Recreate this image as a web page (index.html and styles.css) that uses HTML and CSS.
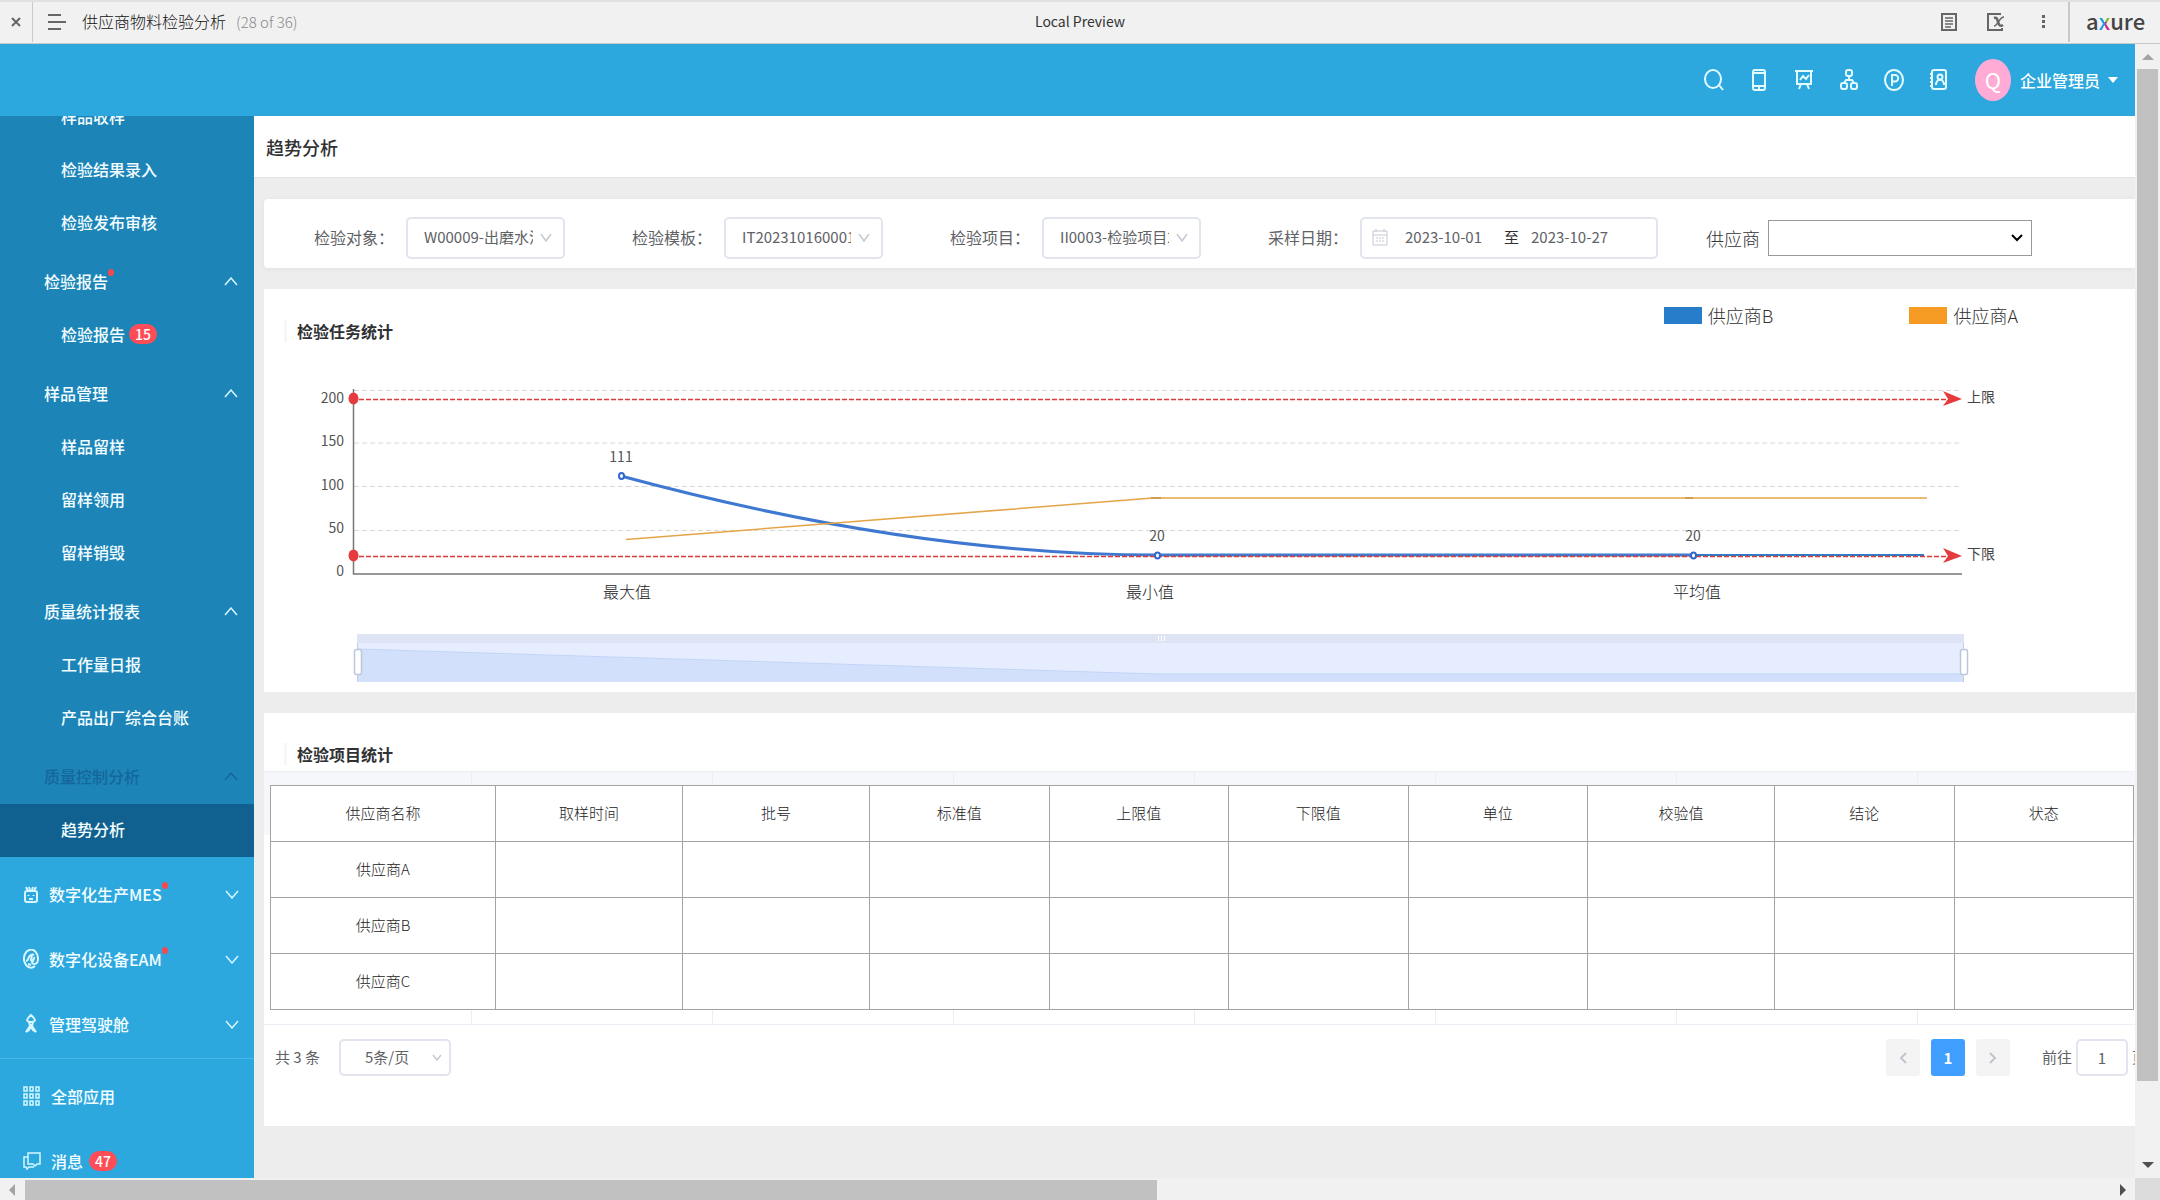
FILE: index.html
```html
<!DOCTYPE html>
<html lang="zh-CN">
<head>
<meta charset="utf-8">
<title>供应商物料检验分析</title>
<link rel="stylesheet" href="styles.css">
</head>
<body>
<header class="topbar">
  <button class="topbar-close" aria-label="关闭"><svg width="10" height="10" viewBox="0 0 10 10"><path d="M1 1l8 8M9 1l-8 8" stroke="#666" stroke-width="2"/></svg></button>
  <button class="topbar-menu" aria-label="页面列表"><svg width="18" height="16" viewBox="0 0 18 16"><path d="M0 1h13M0 8h18M0 15h13" stroke="#666" stroke-width="2"/></svg></button>
  <span class="topbar-title">供应商物料检验分析</span>
  <span class="topbar-count">(28 of 36)</span>
  <span class="topbar-mode">Local Preview</span>
  <div class="topbar-tools">
    <button aria-label="备注"><svg width="16" height="18" viewBox="0 0 16 18" fill="none" stroke="#666" stroke-width="2"><path d="M1 1h14v16H1z"/><path d="M4 5h8M4 8h8M4 11h8M4 14h6" stroke-width="1.5"/></svg></button>
    <button aria-label="变量"><svg width="18" height="18" viewBox="0 0 18 18" fill="none" stroke="#666" stroke-width="2"><path d="M14 1H1v16h14v-2"/><path d="M7 5c3-1 3 1 4 4s2 5 5 3" stroke-width="2.5"/><path d="M17 4c-2 0-3 1-5 4s-3 5-5 5" stroke-width="1.5"/></svg></button>
    <button aria-label="更多"><svg width="4" height="16" viewBox="0 0 4 16" fill="#666"><path d="M0 1h3v3H0zM0 6h3v3H0zM0 11h3v3H0z"/></svg></button>
  </div>
  <a class="axure" href="#">a<span class="axure-x">x</span>ure</a>
</header>

<div class="viewport">
  <div class="app">
    <div class="appbar">
      <button aria-label="搜索"><svg width="22" height="24" viewBox="0 0 22 24"><ellipse cx="10" cy="11" rx="8" ry="9"/><path d="M16 17l4 5"/></svg></button>
      <button aria-label="手机"><svg width="22" height="24" viewBox="0 0 22 24"><rect x="5" y="2" width="12" height="20" rx="2"/><path d="M5 5h12M5 18h12M10 20h2"/></svg></button>
      <button aria-label="看板"><svg width="22" height="24" viewBox="0 0 22 24"><path d="M2 3h18M4 3v13h14V3M7 12l3-4 3 3 3-4M8 16l-2 5M14 16l2 5"/></svg></button>
      <button aria-label="组织"><svg width="22" height="24" viewBox="0 0 22 24"><rect x="8" y="2" width="6" height="6" rx="2"/><rect x="3" y="15" width="6" height="6" rx="2"/><rect x="13" y="15" width="6" height="6" rx="2"/><path d="M11 8v4M6 15l2-3h6l2 3"/></svg></button>
      <button aria-label="平台"><svg width="22" height="24" viewBox="0 0 22 24"><ellipse cx="11" cy="12" rx="9" ry="10"/><path d="M9 18V7h3a3 3 0 0 1 0 6.500H9"/></svg></button>
      <button aria-label="通讯录"><svg width="22" height="24" viewBox="0 0 22 24"><rect x="4" y="2" width="14" height="19" rx="2"/><circle cx="12" cy="9" r="2.500"/><path d="M8 17c0-7 8-7 8 0M2 6h3M2 10h3M2 14h3M2 18h3"/></svg></button>
      <span class="avatar">Q</span>
      <button class="user">企业管理员<svg width="10" height="6" viewBox="0 0 10 6"><path class="solid" d="M0 0h10L5 6z"/></svg></button>
    </div>

    <div class="workspace">
      <nav class="sidebar">
        <ul class="tree">
          <li><a href="#">样品收样</a></li>
          <li><a href="#">检验结果录入</a></li>
          <li><a href="#">检验发布审核</a></li>
          <li class="group"><a href="#"><span class="dot">检验报告</span><svg class="chev" width="14" height="9" viewBox="0 0 14 9"><path d="M1 8l6-7 6 7"/></svg></a></li>
          <li><a href="#">检验报告<span class="badge">15</span></a></li>
          <li class="group"><a href="#">样品管理<svg class="chev" width="14" height="9" viewBox="0 0 14 9"><path d="M1 8l6-7 6 7"/></svg></a></li>
          <li><a href="#">样品留样</a></li>
          <li><a href="#">留样领用</a></li>
          <li><a href="#">留样销毁</a></li>
          <li class="group"><a href="#">质量统计报表<svg class="chev" width="14" height="9" viewBox="0 0 14 9"><path d="M1 8l6-7 6 7"/></svg></a></li>
          <li><a href="#">工作量日报</a></li>
          <li><a href="#">产品出厂综合台账</a></li>
          <li class="group dim"><a href="#">质量控制分析<svg class="chev" width="14" height="9" viewBox="0 0 14 9"><path d="M1 8l6-7 6 7"/></svg></a></li>
          <li class="active"><a href="#">趋势分析</a></li>
        </ul>
        <ul class="modules">
          <li><a href="#"><svg width="16" height="20" viewBox="0 0 16 20"><path d="M4 7h8a2 2 0 0 1 2 2v7a2 2 0 0 1-2 2H4a2 2 0 0 1-2-2V9a2 2 0 0 1 2-2zM3 3l2 4M6 3l1 3M10 3l-1 3M13 3l-2 4M5.500 11v1M10.500 11v1M6 15h4"/></svg><span class="dot">数字化生产MES</span><svg class="chev" width="14" height="9" viewBox="0 0 14 9"><path d="M1 1l6 7 6-7"/></svg></a></li>
          <li><a href="#"><svg width="16" height="20" viewBox="0 0 16 20"><path d="M12 17a7 9 0 1 1 3-7c0 6-6 6-6 3s3-2 2-5M3 12c2 0 2-2 3-4s3-3 5-2M5 15l3 1M9 6l-1 5 3 1"/></svg><span class="dot">数字化设备EAM</span><svg class="chev" width="14" height="9" viewBox="0 0 14 9"><path d="M1 1l6 7 6-7"/></svg></a></li>
          <li><a href="#"><svg width="16" height="20" viewBox="0 0 16 20"><path d="M8 1c-2 2-4 4-4 5s2 2 4 2 4-1 4-2-2-3-4-5zM6 8l1 4-4 6 3-2 2-4 2 4 3 2-4-6 1-4"/></svg><span>管理驾驶舱</span><svg class="chev" width="14" height="9" viewBox="0 0 14 9"><path d="M1 1l6 7 6-7"/></svg></a></li>
        </ul>
        <ul class="modules shortcuts">
          <li><a href="#"><svg width="18" height="20" viewBox="0 0 18 20"><path d="M1 1h3v4H1zM7 1h3v4H7zM13 1h3v4h-3zM1 8h3v4H1zM7 8h3v4H7zM13 8h3v4h-3zM1 15h3v4H1zM7 15h3v4H7zM13 15h3v4h-3z"/></svg><span>全部应用</span></a></li>
          <li><a href="#"><svg width="18" height="20" viewBox="0 0 18 20"><path d="M5 2h12v11h-3l-2 2-2-2H5zM5 6H1v10h2l1 2 2-2h5"/></svg><span>消息</span><span class="badge">47</span></a></li>
        </ul>
      </nav>

      <main class="content">
        <h1 class="page-title">趋势分析</h1>

        <form class="card filters">
          <div class="field"><label for="f-object">检验对象：</label><select id="f-object"><option>W00009-出磨水泥</option></select></div>
          <div class="field"><label for="f-template">检验模板：</label><select id="f-template"><option>IT202310160001</option></select></div>
          <div class="field"><label for="f-item">检验项目：</label><select id="f-item"><option>II0003-检验项目2</option></select></div>
          <div class="field"><label for="f-from">采样日期：</label>
            <div class="range">
              <svg width="16" height="18" viewBox="0 0 16 18"><path d="M1 3h14v14H1zM1 7h14M4 1v3M12 1v3M4 10h2M7 10h2M10 10h2M4 13h2M7 13h2M10 13h2"/></svg>
              <input id="f-from" value="2023-10-01"><span>至</span><input aria-label="结束日期" value="2023-10-27">
            </div>
          </div>
          <div class="field supplier"><label for="f-supplier">供应商</label><select id="f-supplier"><option></option></select></div>
        </form>

        <section class="card">
          <div class="chart-head">
            <h2>检验任务统计</h2>
            <ul class="legend">
              <li><i class="swatch blue"></i>供应商B</li>
              <li><i class="swatch orange"></i>供应商A</li>
            </ul>
          </div>
          <svg class="chart" viewBox="264 370 1871 322">
            <g class="grid"><path d="M354 390.500h1608M354 443h1608M354 486.500h1608M354 530.500h1608"/></g>
            <path class="axis" d="M353.500 389v185H1962"/>
            <g class="ticks"><text x="344" y="403">200</text><text x="344" y="446">150</text><text x="344" y="490">100</text><text x="344" y="533">50</text><text x="344" y="576">0</text></g>
            <path class="series-b" d="M621 476C821 530 999 555 1157 555H1693"/>
            <path class="series-b tail" d="M1693 555H1924"/>
            <path class="series-a" d="M626 539.500L1153 498H1927"/>
            <path class="series-a mark" d="M1151 498h10M1685 498h8"/>
            <path class="limit" d="M359 399.500H1950M359 556.500H1950"/>
            <g class="limit-end"><ellipse cx="353.500" cy="398.500" rx="5" ry="6"/><ellipse cx="353.500" cy="555.500" rx="5" ry="6"/><path d="M1943 391l19 8-19 7 5-7zM1943 548l19 8-19 7 5-7z"/></g>
            <g class="points"><ellipse cx="621.500" cy="476" rx="2.500" ry="3"/><ellipse cx="1157.500" cy="555.500" rx="2.500" ry="3"/><ellipse cx="1693.500" cy="555.500" rx="2.500" ry="3"/></g>
            <g class="values"><text x="621" y="462">111</text><text x="1157" y="541">20</text><text x="1693" y="541">20</text></g>
            <g class="cats"><text x="627" y="598">最大值</text><text x="1150" y="598">最小值</text><text x="1697" y="598">平均值</text></g>
            <g class="ends"><text x="1967" y="402">上限</text><text x="1967" y="559">下限</text></g>
            <g class="zoom">
              <path fill="#dee4f3" d="M357 634h1607v9H357z"/>
              <path fill="#e6edfe" d="M357 643h1607v39H357z"/>
              <path fill="#d3e0fc" d="M357 649L1157 674h807v8H357z"/>
              <path fill="none" stroke="#c1d4f8" d="M357 649L1157 674h807"/>
              <path fill="none" stroke="#c3cde6" d="M357.500 643v39M1963.500 643v39"/>
              <path fill="none" stroke="#fff" stroke-width="5" stroke-dasharray="1 2" d="M1158 638.500h7"/>
              <rect x="354.500" y="649.500" width="7" height="25" rx="2"/><rect x="1960.500" y="649.500" width="7" height="25" rx="2"/>
            </g>
          </svg>
        </section>

        <section class="card">
          <h2>检验项目统计</h2>
          <div class="sheet">
            <table>
              <colgroup><col class="w-name"><col class="w-mid"><col class="w-mid"><col><col><col><col><col class="w-mid"><col><col></colgroup>
              <thead><tr><th>供应商名称</th><th>取样时间</th><th>批号</th><th>标准值</th><th>上限值</th><th>下限值</th><th>单位</th><th>校验值</th><th>结论</th><th>状态</th></tr></thead>
              <tbody>
                <tr><td>供应商A</td><td></td><td></td><td></td><td></td><td></td><td></td><td></td><td></td><td></td></tr>
                <tr><td>供应商B</td><td></td><td></td><td></td><td></td><td></td><td></td><td></td><td></td><td></td></tr>
                <tr><td>供应商C</td><td></td><td></td><td></td><td></td><td></td><td></td><td></td><td></td><td></td></tr>
              </tbody>
            </table>
          </div>
          <div class="pager">
            <span>共 3 条</span>
            <select aria-label="每页条数"><option>5条/页</option></select>
            <div class="pages">
              <button aria-label="上一页"><svg width="8" height="12" viewBox="0 0 8 12"><path d="M7 1L2 6l5 5"/></svg></button>
              <button class="current">1</button>
              <button aria-label="下一页"><svg width="8" height="12" viewBox="0 0 8 12"><path d="M1 1l5 5-5 5"/></svg></button>
            </div>
            <label for="goto">前往</label><input id="goto" value="1"><span class="cut">页</span>
          </div>
        </section>
      </main>
    </div>
  </div>

  <div class="vbar"><i class="arrow up"></i><div class="thumb"></div><i class="arrow down"></i></div>
  <div class="hbar"><i class="arrow left"></i><div class="thumb"></div><i class="arrow right"></i></div>
  <div class="corner"></div>
</div>
</body>
</html>
```
FILE: styles.css
```css
* { box-sizing: border-box; }
body, h1, h2, ul { margin: 0; padding: 0; }
ul { list-style: none; }
a { color: inherit; text-decoration: none; }
button { padding: 0; border: 0; background: none; color: inherit; font: inherit; }
select, input { font: inherit; color: inherit; margin: 0; }
svg { display: block; flex: none; }

body {
  display: flex;
  flex-direction: column;
  height: 100vh;
  overflow: hidden;
  font: 16px/24px "Noto Sans CJK SC", sans-serif;
  color: #606266;
}

/* Preview toolbar */
.topbar {
  display: flex;
  align-items: center;
  flex: none;
  height: 44px;
  position: relative;
  padding-bottom: 1px;
  border-top: 2px solid #e1e1e1;
  border-bottom: 1px solid #c9c9c9;
  background: #f1f1f1;
  color: #333;
}
.topbar-close { display: flex; align-items: center; justify-content: center; width: 33px; height: 100%; border-right: 1px solid #c9c9c9; }
.topbar-menu { margin: 0 16px 0 15px; }
.topbar-title { padding-bottom: 2px; font-weight: 300; color: #111; }
.topbar-count { margin-left: 10px; padding-bottom: 1px; font-size: 15px; font-weight: 300; color: #888; }
.topbar-mode { position: absolute; left: 0; right: 0; padding-bottom: 3px; text-align: center; font-size: 14px; pointer-events: none; }
.topbar-tools { display: flex; align-items: center; gap: 30px; margin-left: auto; padding-right: 22px; }
.topbar-tools button:last-child { margin-left: 7px; }
.axure {
  width: 92px;
  height: 100%;
  padding-left: 16px;
  border-left: 2px solid #c9c9c9;
  font: 500 22px/36px "Noto Sans CJK SC", sans-serif;
  color: #444;
}
.axure-x {
  background: conic-gradient(from 0deg at 50% 56%, #7ab929 0 90deg, #d6218b 90deg 180deg, #1a9cd8 180deg 360deg);
  background-clip: text;
  -webkit-background-clip: text;
  color: transparent;
}

/* Scrolling frame */
.viewport { flex: 1; min-height: 0; display: grid; grid-template: minmax(0, 1fr) 22px / minmax(0, 1fr) 25px; }
.app { display: flex; flex-direction: column; min-height: 0; overflow: hidden; background: #ededed; }
.vbar, .hbar { display: flex; align-items: center; background: #f1f1f1; }
.vbar { flex-direction: column; padding: 10px 0 10px; }
.hbar { padding: 2px 9px 0; }
.corner { background: #dcdcdc; }
.vbar .thumb { width: 21px; height: 1012px; margin-top: 9px; background: #c1c1c1; }
.hbar .thumb { width: 1132px; height: 20px; margin-left: 10px; background: #c1c1c1; }
.arrow { border: 6px solid transparent; }
.up { border-width: 0 6px 6px; border-bottom-color: #a3a3a3; }
.down { margin-top: auto; border-width: 6px 6px 0; border-top-color: #505050; }
.left { border-width: 6px 6px 6px 0; border-right-color: #a3a3a3; }
.right { margin-left: auto; border-width: 6px 0 6px 6px; border-left-color: #505050; }

/* Application header */
.appbar {
  display: flex;
  align-items: center;
  justify-content: flex-end;
  flex: none;
  gap: 23px;
  height: 72px;
  padding-right: 17px;
  background: #2da8df;
  color: #fff;
}
.appbar svg { fill: none; stroke: #e2fbff; stroke-width: 2; }
.appbar .solid { fill: #fff; stroke: none; }
.avatar { width: 36px; height: 42px; margin-left: 2px; border-radius: 50%; background: #ffabd5; text-align: center; font-size: 22px; line-height: 41px; }
.user { display: flex; align-items: center; gap: 8px; margin-left: -14px; padding-bottom: 1px; font-weight: 500; }

.workspace { display: flex; flex: 1; min-height: 0; }

/* Sidebar */
.sidebar { flex: none; width: 254px; overflow: hidden; background: #2da8df; color: #f2fdff; font-weight: 500; }
.sidebar svg { fill: none; stroke: #d8f6ff; stroke-width: 2; }
.tree { background: #1d84b8; margin-top: -25px; }
.tree a { display: flex; align-items: center; height: 53px; padding: 0 16px 3px 61px; }
.tree .group { padding-top: 6px; }
.tree .group a { padding-left: 44px; }
.tree .dim { color: #14679a; }
.tree .dim svg { stroke: #14679a; }
.tree .active { background: #10618f; }
.sidebar .chev { margin-left: auto; stroke-width: 1.500; }
.dot { position: relative; }
.dot::after { content: ""; position: absolute; left: 100%; top: 0; width: 6px; height: 7px; border-radius: 50%; background: #f5484f; }
.badge { margin-left: 4px; padding: 0 6px; border-radius: 10px; background: #ff4d57; color: #fff; font-size: 14px; line-height: 20px; }
.modules { padding-top: 6px; }
.modules a { display: flex; align-items: center; gap: 10px; height: 65px; padding: 0 15px 3px 23px; }
.modules .badge { margin-left: -4px; }
.shortcuts { border-top: 1px solid #4ab7e6; }
.shortcuts svg { stroke-width: 1.500; }

/* Content */
.content { flex: 1; min-width: 0; overflow: hidden; }
.page-title { height: 62px; margin-bottom: 21px; padding-left: 12px; background: #fff; border-bottom: 1px solid #e2e2e2; font-size: 18px; font-weight: 500; line-height: 62px; color: #303133; }
.card { margin: 0 0 21px 10px; background: #fff; }
h2 { margin-left: 20px; padding-left: 10px; border-left: 3px solid #f5f6fa; font-size: 16px; font-weight: 700; line-height: 22px; color: #303133; }

.filters { display: flex; align-items: center; gap: 67px; height: 69px; padding: 8px 0 0 50px; border-radius: 4px 0 0 4px; box-shadow: 0 1px 6px #0000000d; }
.field { display: flex; align-items: center; flex: none; }
.field label { width: 92px; padding-bottom: 2px; }
.field select, .range, .pager select, .pager input { border: 2px solid #e2e4ee; border-radius: 5px; background-color: #fff; }
.field select {
  width: 159px;
  height: 42px;
  padding: 0 30px 2px 16px;
  appearance: none;
  font-size: 15px;
  background-image: url("data:image/svg+xml,%3Csvg xmlns='http://www.w3.org/2000/svg' width='12' height='8' fill='none' stroke='%23c4c8d0' stroke-width='1.5'%3E%3Cpath d='M1 0l5 7 5-7'/%3E%3C/svg%3E");
  background-repeat: no-repeat;
  background-position: right 11px center;
}
.range { display: flex; align-items: center; width: 298px; height: 42px; padding: 0 0 2px 10px; font-size: 15px; }
.range svg { fill: none; stroke: #c4c8d0; }
.range input { width: 80px; margin-left: 17px; padding: 0; border: 0; background: none; }
.range span { margin-left: 19px; color: #303133; }
.range span + input { margin-left: 12px; }
.supplier { margin-left: -19px; color: #333; }
.supplier label { width: 62px; padding: 0; font-size: 18px; font-weight: 300; }
.field.supplier select {
  width: 264px;
  height: 36px;
  border: 1px solid #999;
  border-radius: 0;
  background-image: url("data:image/svg+xml,%3Csvg xmlns='http://www.w3.org/2000/svg' width='12' height='8' fill='none' stroke='%23000' stroke-width='2'%3E%3Cpath d='M1 1l5 5 5-5'/%3E%3C/svg%3E");
  background-position: right 8px center;
}

/* Chart */
.chart-head { display: flex; align-items: flex-start; justify-content: space-between; height: 81px; padding: 14px 117px 0 0; }
.chart-head h2 { margin-top: 17px; }
.legend { display: flex; gap: 136px; font-size: 18px; font-weight: 300; color: #333; }
.legend li { display: flex; align-items: center; gap: 6px; }
.swatch { width: 38px; height: 17px; }
.blue { background: #287dcb; }
.orange { background: #f59a23; }
.chart { width: 100%; height: auto; font-size: 14px; fill: #555; }
.grid { stroke: #d8d8d8; stroke-dasharray: 5 3; }
.axis { fill: none; stroke: #777; stroke-width: 1.500; }
.ticks { text-anchor: end; }
.values, .cats { text-anchor: middle; }
.cats { font-size: 16px; font-weight: 300; fill: #222; }
.ends { fill: #444; }
.series-b { fill: none; stroke: #3f78d0; stroke-width: 3; }
.series-b.tail { stroke: #287dcb; stroke-width: 2; }
.series-a { fill: none; stroke: #e4a548; stroke-width: 1.500; }
.series-a.mark { stroke: #d29c50; stroke-width: 2; }
.limit { fill: none; stroke: #d93a3a; stroke-width: 1.500; stroke-dasharray: 5 2; }
.limit-end { fill: #e53b3f; }
.points { fill: #fff; stroke: #3366cc; stroke-width: 2; }
.zoom rect { fill: #fff; stroke: #bcc7dc; stroke-width: 1.500; }

/* Results table, laid over a paler grid */
.content section:last-child { height: 413px; padding-top: 30px; }
.sheet {
  margin-top: 6px;
  padding: 13px 1px 14px 6px;
  border-top: 1px solid #ebeef5;
  border-bottom: 1px solid #ebeef5;
  background:
    linear-gradient(90deg, #ebeef5 1px, transparent 1px) 207px 0 / 241px 100%,
    linear-gradient(#f5f7fa 63px, transparent 63px) 0 0 / 100% 100%;
}
table { width: 100%; border-collapse: collapse; table-layout: fixed; background: #fff; font-size: 15px; font-weight: 300; color: #222; }
th, td { height: 56px; padding: 0 0 2px; border: 1px solid #a3a3a3; text-align: center; font-weight: 300; }
.w-name { width: 225px; }
.w-mid { width: 187px; }

.pager { display: flex; align-items: center; margin: 14px 0 0 11px; font-size: 15px; }
.pager select {
  width: 112px;
  height: 37px;
  margin: 0 auto 0 19px;
  padding: 0 0 2px 24px;
  appearance: none;
  background-image: url("data:image/svg+xml,%3Csvg xmlns='http://www.w3.org/2000/svg' width='10' height='7' fill='none' stroke='%23c4c8d0' stroke-width='1.5'%3E%3Cpath d='M1 1l4 5 4-5'/%3E%3C/svg%3E");
  background-repeat: no-repeat;
  background-position: right 7px center;
}
.pager > span, .pager label { padding-bottom: 2px; }
.pages { display: flex; gap: 11px; margin-right: 32px; }
.pages button { display: flex; align-items: center; justify-content: center; width: 34px; height: 37px; border-radius: 3px; background: #f4f4f5; font-weight: 700; }
.pages .current { background: #409eff; color: #fff; }
.pages svg { fill: none; stroke: #c0c4cc; stroke-width: 2; }
.pager input { width: 52px; height: 37px; margin-left: 4px; padding: 0 0 1px; text-align: center; }
.cut { width: 7px; padding-left: 4px; overflow: hidden; white-space: nowrap; }
```
